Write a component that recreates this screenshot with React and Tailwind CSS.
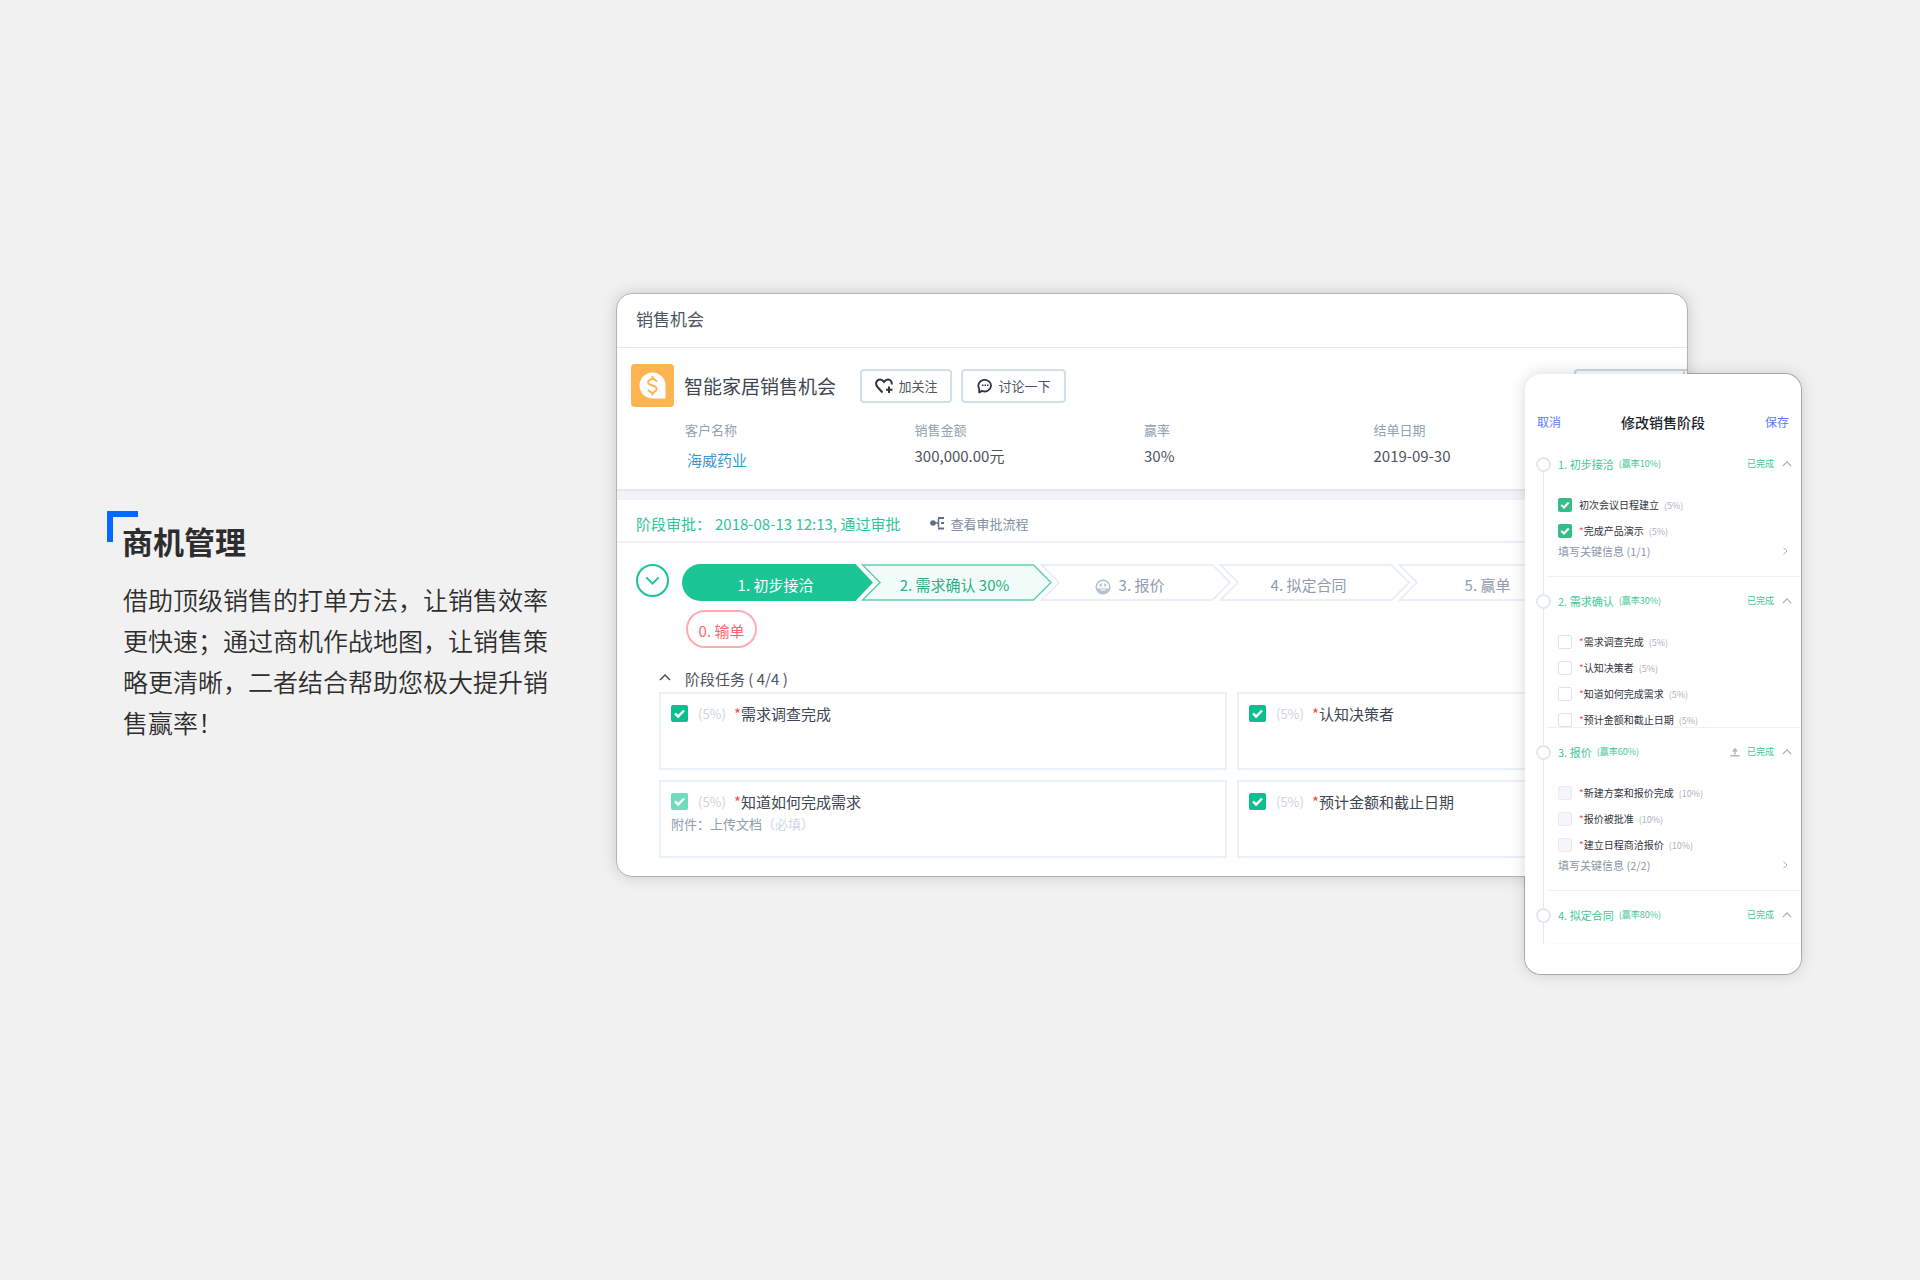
import React, {useState} from "react";

const dealFields = [
    {label: "客户名称", value: "海威药业", link: true},
    {label: "销售金额", value: "300,000.00元"},
    {label: "赢率", value: "30%"},
    {label: "结单日期", value: "2019-09-30"},
]

const stages = [
    {name: "1. 初步接洽", state: "done"},
    {name: "2. 需求确认 30%", state: "current"},
    {name: "3. 报价", state: "todo", smile: true},
    {name: "4. 拟定合同", state: "todo"},
    {name: "5. 赢单", state: "todo"},
]

const stageTasks = [
    {id: "t1", name: "需求调查完成"},
    {id: "t2", name: "认知决策者"},
    {id: "t3", name: "知道如何完成需求", faded: true, attachment: "附件：上传文档"},
    {id: "t4", name: "预计金额和截止日期"},
]

const mobileStages = [
    {
        name: "1. 初步接洽",
        rate: "(赢率10%)",
        info: "填写关键信息 (1/1)",
        tasks: [
            {name: "初次会议日程建立", weight: "(5%)", checked: true},
            {name: "完成产品演示", weight: "(5%)", required: true, checked: true},
        ]
    },
    {
        name: "2. 需求确认",
        rate: "(赢率30%)",
        tasks: [
            {name: "需求调查完成", weight: "(5%)", required: true},
            {name: "认知决策者", weight: "(5%)", required: true},
            {name: "知道如何完成需求", weight: "(5%)", required: true},
            {name: "预计金额和截止日期", weight: "(5%)", required: true},
        ]
    },
    {
        name: "3. 报价",
        rate: "(赢率60%)",
        info: "填写关键信息 (2/2)",
        upload: true,
        tasks: [
            {name: "新建方案和报价完成", weight: "(10%)", required: true, disabled: true},
            {name: "报价被批准", weight: "(10%)", required: true, disabled: true},
            {name: "建立日程商洽报价", weight: "(10%)", required: true, disabled: true},
        ]
    },
    {name: "4. 拟定合同", rate: "(赢率80%)", tasks: []},
]

const Chevron = ({className, d = "M1 6 6 1l5 5"}) => (
    <svg className={className} viewBox="0 0 12 7" fill="none" stroke="currentColor" strokeWidth="1.5"
         aria-hidden="true">
        <path d={d}/>
    </svg>
)

const DollarIcon = () => (
    <svg className="size-[43px] shrink-0" viewBox="0 0 43 43" fill="none" aria-hidden="true">
        <rect width="43" height="43" rx="4" fill="#ffb452"/>
        <path d="M21.500 8.500a13 13 0 0 1 13 13V34.500h-13a13 13 0 0 1 0-26z" fill="#fff"/>
        <path d="M26 17.500l-4.500-3.500-4 3c-1 1.500 0 3 1.500 3.500l5 2c2 1 2 3 1 4l-3.500 3-4.500-3.500M21.500 12v2.500M21.500 29v2.500"
              stroke="#ffb452" strokeWidth="2"/>
    </svg>
)

const HeartPlusIcon = () => (
    <svg className="h-4 w-[18px]" viewBox="0 0 18 16" fill="none" stroke="#2c3642" strokeWidth="2"
         aria-hidden="true">
        <path d="M7.500 14.500 2.500 9C-.5 5.500 2 1.500 5 1.500c1.600 0 3 .9 4 2.300 1-1.400 2.400-2.300 4-2.300 2.500 0 4.200 2.300 3.600 5"/>
        <path d="M14 8.500v6.500M11 11.700h6.500"/>
    </svg>
)

const ChatIcon = () => (
    <svg className="size-4" viewBox="0 0 16 16" fill="none" stroke="#2c3642" strokeWidth="1.800" aria-hidden="true">
        <path d="M2.200 14.500V10.500A6.300 5.800 0 1 1 5 12.900z" strokeLinejoin="round"/>
        <path d="M5 7.300h1.500M7.500 7.300H9M10 7.300h1.500" strokeWidth="1.500"/>
    </svg>
)

const FlowIcon = () => (
    <svg className="size-[15px]" viewBox="0 0 15 15" fill="none" stroke="#5f6f84" strokeWidth="1.500"
         aria-hidden="true">
        <circle cx="3" cy="7" r="2.800" fill="#5f6f84" stroke="none"/>
        <path d="M5 7h4M8.500 3v8.500"/>
        <path d="M8 2h6M11 7h3M8 12.500h6" strokeWidth="2"/>
    </svg>
)

const SmileIcon = () => (
    <svg className="mt-1 size-4" viewBox="0 0 16 16" fill="none" stroke="#b4c0cf" strokeWidth="1.500"
         aria-hidden="true">
        <circle cx="8" cy="8" r="6.800"/>
        <path d="M5.700 4.500v3M10.300 4.500v3" strokeWidth="2"/>
        <path d="M2 9.500h12c-.8 3-3 4.800-6 4.800s-5.200-1.800-6-4.800z" fill="#b4c0cf" stroke="none"/>
        <path d="M5.500 11h5" stroke="#fff" strokeWidth="1.200"/>
    </svg>
)

const UploadIcon = () => (
    <svg className="mr-[7px] size-[10px]" viewBox="0 0 10 10" fill="none" stroke="#aeb7c6" strokeWidth="1.400"
         aria-hidden="true">
        <path d="M5 7.500V3M.5 8.700h9"/>
        <path d="M2 4.500 5 .8 8 4.500z" fill="#aeb7c6" stroke="none"/>
    </svg>
)

const Checkbox = ({id, checked, disabled, size, color}) => {
    const [on, setOn] = useState(!!checked)

    return <span className="grid shrink-0">
        <input
            id={id}
            type="checkbox"
            checked={on}
            disabled={disabled}
            onChange={() => setOn(!on)}
            className={`col-start-1 row-start-1 appearance-none rounded-xs ${size} 
                ${on ? color : disabled ? 'border border-[#e8ecf1] bg-[#f4f6f9]' : 'border border-[#dde3eb] bg-white'}`}/>
        {on && (
            <svg
                className={`pointer-events-none col-start-1 row-start-1 ${size}`}
                viewBox="0 0 17 17"
                fill="none"
                stroke="#fff"
                strokeWidth="2.500"
                aria-hidden="true">
                <path d="M4 8.500l3.200 3L13 5.500"/>
            </svg>)}
    </span>
}

const Stage = ({stage, first}) => {
    const colors = {
        done: "fill-[#1cc596] text-white",
        current: "fill-[#f1fcf8] stroke-[#5fcfad] text-[#2fae84]",
        todo: "fill-white stroke-[#e3ebf5] text-[#8f9cad]",
    }
    const shape = first
        ? "M18.500 0H173.500L191 18.500 173.500 37H18.500A18.500 18.500 0 0 1 18.500 0z"
        : "M1.500 1H172.500L190 18.500 172.500 36H1.500L19 18.500z"

    return <li className={first ? 'shrink-0' : '-ml-3 shrink-0'}>
        <button className={`grid h-[37px] w-[191px] ${colors[stage.state]}`}>
            <svg className="col-start-1 row-start-1 h-[37px] w-[191px]" viewBox="0 0 191 37" strokeWidth="1.500"
                 aria-hidden="true">
                <path d={shape}/>
            </svg>
            <span
                className={`col-start-1 row-start-1 flex items-center justify-center gap-2 self-center pt-1
                    ${stage.state === 'todo' ? 'pr-3' : 'pr-1'}`}>
                {stage.smile && <SmileIcon/>}
                {stage.name}
            </span>
        </button>
    </li>
}

const TaskCard = ({task}) => (
    <li className="h-[78px] border-2 border-[#eaf1f8] px-[10px] pt-[10px]">
        <div className="flex h-[18px] items-center">
            <Checkbox id={task.id} checked size="size-[17px]" color={task.faded ? 'bg-[#6fdcbc]' : 'bg-[#0cbf8d]'}/>
            <label htmlFor={task.id} className="flex items-center pt-[2px]">
                <span className="ml-[10px] w-9 text-[13px] text-[#ccd5df]">(5%)</span>
                <span className="text-[#ff4a4a]">*</span>
                <span className="text-[#3d4652]">{task.name}</span>
            </label>
        </div>
        {task.attachment && (
            <p className="mt-1 text-[13px] leading-5 text-[#8f9cad]">
                {task.attachment}
                <span className="text-[#ccd7e4]">（必填）</span>
            </p>)}
    </li>
)

const DealPanel = () => (
    <article
        className="relative mr-[113px] overflow-hidden rounded-2xl border border-[#b4b4b4] bg-white pb-[18px]
            text-[15px] leading-5 text-[#4d5560] shadow-[0_0_16px_rgba(0,0,0,0.16)]">
        <header className="flex h-[54px] items-center border-b border-[#e1ebf6] px-[19px] pb-1">
            <h2 className="text-[17px]">销售机会</h2>
        </header>
        <section className="pt-4 pb-[15px]">
            <div className="flex h-[43px] items-center pl-[14px]">
                <DollarIcon/>
                <h3 className="ml-[10px] text-[19px] text-[#3d4652]">智能家居销售机会</h3>
                <button
                    className="ml-6 flex h-[34px] w-[92px] items-center justify-center gap-[6px] rounded-sm border-2
                        border-[#d3dfea] text-[13px]">
                    <HeartPlusIcon/>
                    加关注
                </button>
                <button
                    className="ml-[9px] flex h-[34px] w-[105px] items-center justify-center gap-[6px] rounded-sm border-2
                        border-[#d3dfea] text-[13px]">
                    <ChatIcon/>
                    讨论一下
                </button>
                <div className="ml-auto flex h-[34px] w-[113px] rounded-l-sm border-2 border-r-0 border-[#c9d8e4]">
                    <span className="ml-auto w-1 border-l-2 border-[#c9d8e4]"/>
                </div>
            </div>
            <dl className="mr-[84px] ml-[68px] grid grid-cols-4 pt-[13px]">
                {dealFields.map(field => (
                    <div key={field.label} className="h-[54px]">
                        <dt className="text-[13px] text-[#93a2b4]">{field.label}</dt>
                        <dd className={field.link ? 'mt-[10px] ml-[2px]' : 'mt-[6px]'}>
                            {field.link
                                ? <a href="#" className="text-[#3a97d3]">{field.value}</a>
                                : field.value}
                        </dd>
                    </div>))}
            </dl>
        </section>
        <div className="h-[11px] border-t-2 border-[#e4e7ec] bg-[#f1f3f7]"/>
        <div className="flex h-[43px] items-center border-b-2 border-[#edf0f5] px-[19px] pt-[6px] text-[#2fc497]">
            <p>阶段审批：<span className="ml-1">2018-08-13 12:13, 通过审批</span></p>
            <button className="ml-[30px] flex items-center gap-[5px] text-[13px] text-[#8190a3]">
                <FlowIcon/>
                查看审批流程
            </button>
        </div>
        <div className="flex pt-[21px] pl-[19px]">
            <button
                aria-label="收起"
                className="flex size-[33px] shrink-0 items-center justify-center rounded-full border-2
                    border-[#19c497] text-[#19c497]">
                <Chevron className="h-[9px] w-[15px]" d="M1 1l5 5 5-5"/>
            </button>
            <div className="ml-[13px]">
                <ol className="flex">
                    {stages.map((stage, i) => <Stage key={stage.name} stage={stage} first={i === 0}/>)}
                </ol>
                <button
                    className="mt-[9px] ml-1 h-[38px] w-[71px] rounded-full border-2 border-[#ffabb2] pt-1
                        text-[#ff6573]">
                    0. 输单
                </button>
            </div>
        </div>
        <section className="pt-[21px] pl-[42px]">
            <h4>
                <button className="flex items-center gap-[14px]">
                    <Chevron className="mb-1 h-[7px] w-3"/>
                    阶段任务 ( 4/4 )
                </button>
            </h4>
            <ul className="mt-[3px] grid grid-cols-[568px_568px] gap-[10px]">
                {stageTasks.map(task => <TaskCard key={task.id} task={task}/>)}
            </ul>
        </section>
    </article>
)

const MobileTask = ({id, task}) => (
    <li className="flex h-[14px] items-center">
        <Checkbox id={id} checked={task.checked} disabled={task.disabled} size="size-[14px]" color="bg-[#35bd87]"/>
        <label htmlFor={id} className="ml-[7px] text-[#2f353d]">
            {task.required && <span className="text-[#ff4a4a]">*</span>}
            {task.name}
            <span className="ml-[5px] text-[9px] text-[#a9b3c0]">{task.weight}</span>
        </label>
    </li>
)

const MobileStage = ({stage, index}) => (
    <section className="flex">
        <div className="-mr-1 flex w-[15px] flex-col items-center">
            <span className={`h-[18px] w-px ${index === 0 ? '' : 'bg-[#e3e8ee]'}`}/>
            <span className="size-[15px] rounded-full border-2 border-[#e3e8ee] bg-white"/>
            <span className="w-px flex-1 bg-[#e3e8ee]"/>
        </div>
        <div
            className={`flex-1 border-t pt-3 pr-2 pl-[11px]
                ${index === 0 ? 'border-transparent' : 'border-[#edf2f6]'}
                ${stage.tasks.length === 0 ? 'border-b border-b-[#f8f9fb] pb-4' : ''}`}>
            <h3 className="flex h-6 items-center text-[11px] text-[#45c894]">
                {stage.name}
                <span className="ml-[5px] text-[9px]">{stage.rate}</span>
                <span className="ml-auto flex items-center text-[9px]">
                    {stage.upload && <UploadIcon/>}
                    已完成
                </span>
                <Chevron className="ml-2 h-[6px] w-[10px] text-[#a7b0bf]"/>
            </h3>
            {stage.tasks.length > 0 && (
                <ul className="mt-[22px] flex flex-col gap-3 text-[10px]">
                    {stage.tasks.map((task, i) => (
                        <MobileTask key={task.name} id={`m${index}-${i}`} task={task}/>))}
                </ul>)}
            {stage.info && (
                <button
                    className="mt-[5px] mb-[17px] flex h-4 w-full items-center justify-between pr-1 text-[11px]
                        text-[#8996a7]">
                    {stage.info}
                    <svg className="h-2 w-[5px]" viewBox="0 0 5 8" fill="none" stroke="#a7b0bf" aria-hidden="true">
                        <path d="M.5.5 4 4 .5 7.500"/>
                    </svg>
                </button>)}
        </div>
    </section>
)

const MobilePanel = () => (
    <aside
        className="absolute top-[81px] right-0 w-[276px] rounded-2xl bg-white px-px pb-[30px] leading-4
            shadow-[0_0_16px_rgba(0,0,0,0.16)]">
        <header className="flex items-center justify-between px-[11px] pt-10 pb-[9px] text-xs text-[#5a7bfa]">
            <button>取消</button>
            <h2 className="text-sm leading-4 font-medium text-[#20242a]">修改销售阶段</h2>
            <button>保存</button>
        </header>
        <div className="pl-[10px]">
            {mobileStages.map((stage, i) => <MobileStage key={stage.name} stage={stage} index={i}/>)}
        </div>
    </aside>
)

const App = () => {
    return <main
        className="flex min-h-screen items-center bg-[#f1f1f1] pr-[119px] pb-[13px] pl-[107px]
            font-['Noto_Sans_CJK_SC',sans-serif]">
        <section className="w-[447px] shrink-0 pb-[13px] text-[#2d2d2d]">
            <div className="grid">
                <span className="col-start-1 row-start-1 size-[31px] border-t-6 border-l-6 border-[#0768fd]"/>
                <h1 className="col-start-1 row-start-1 mt-[10px] ml-[15px] text-[31px] leading-10 font-bold">商机管理</h1>
            </div>
            <p className="mt-[18px] ml-4 text-[25px] leading-[41px] font-[350]">
                借助顶级销售的打单方法，让销售效率更快速；通过商机作战地图，让销售策略更清晰，二者结合帮助您极大提升销售赢率！
            </p>
        </section>
        <div className="relative ml-[62px] min-w-0 flex-1 pb-[97px]">
            {/* the phone's outline only shows where it leaves the main panel */}
            <div className="absolute top-[81px] right-0 bottom-0 w-[276px] rounded-2xl ring-1 ring-[#b4b4b4]"/>
            <DealPanel/>
            <MobilePanel/>
        </div>
    </main>
}

export default App
